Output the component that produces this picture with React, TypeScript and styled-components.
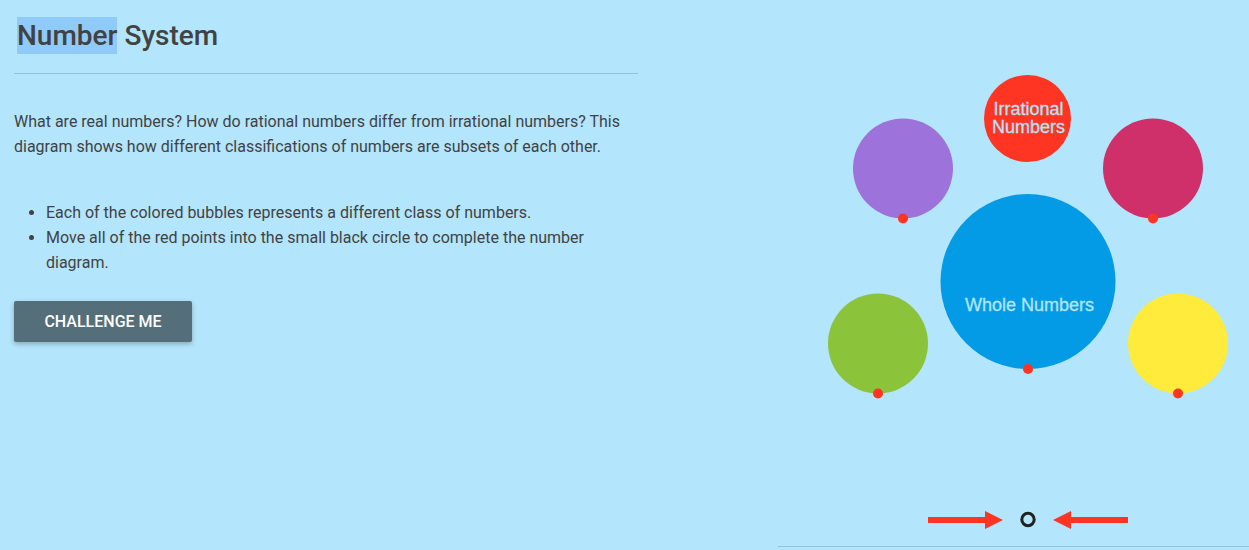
import React from "react";
import styled, { createGlobalStyle } from "styled-components";

const Global = createGlobalStyle`
  html, body { margin: 0; padding: 0; background: #b3e5fc; }
  body { font-family: Roboto, "Noto Sans", Arial, sans-serif; color: #424242; }
  #root { width: 1249px; height: 550px; overflow: hidden; }
`;

const Page = styled.div`
  display: flex;
  width: 1249px;
  height: 550px;
  background: #b3e5fc;
`;

const LeftPane = styled.section`
  width: 624px;
  margin-left: 14px;
  display: flex;
  flex-direction: column;
  align-items: flex-start;
`;

const Header = styled.header`
  align-self: stretch;
  padding: 17px 0 19px 3px;
  border-bottom: 1px solid #90c6dc;
`;

const Title = styled.h1`
  margin: 0;
  font-size: 28px;
  font-weight: 500;
  line-height: 37px;
  color: #424242;
`;

const Highlight = styled.span`
  display: inline-block;
  background: #90caf9;
`;

const Intro = styled.p`
  margin: 35px 0 0;
  font-size: 16px;
  line-height: 25px;
  color: #424242;
`;

const Steps = styled.ul`
  margin: 41px 0 0;
  padding-left: 32px;
  font-size: 16px;
  line-height: 25px;
  color: #424242;
`;

const Button = styled.button`
  margin-top: 26px;
  width: 178px;
  height: 41px;
  border: none;
  border-radius: 2px;
  background: #546e7a;
  color: #fff;
  font-family: Roboto, Arial, sans-serif;
  font-weight: 500;
  font-size: 16px;
  text-transform: uppercase;
  box-shadow: 0 2px 5px rgba(0, 0, 0, 0.26);
  cursor: pointer;
`;

const RightPane = styled.section`
  margin-left: auto;
  width: 471px;
  display: flex;
  flex-direction: column;
`;

const Diagram = styled.svg`
  display: block;
  width: 471px;
  height: 546px;
`;

const Rule = styled.div`
  height: 1px;
  background: #90c6dc;
`;

const BubbleLabel = styled.text`
  font-family: "Liberation Sans", Arial, sans-serif;
  font-size: 18px;
  fill: #b3e5fc;
  stroke: #b3e5fc;
  stroke-width: 0.3px;
`;

type Bubble = { cx: number; cy: number; r: number; color: string; dot: boolean };

const bubbles: Bubble[] = [
  { cx: 125, cy: 168.5, r: 50, color: "#9e72db", dot: true },
  { cx: 249.5, cy: 118.5, r: 43.5, color: "#ff3524", dot: false },
  { cx: 375, cy: 168.5, r: 50, color: "#cf306a", dot: true },
  { cx: 250, cy: 281.5, r: 87.5, color: "#039be5", dot: true },
  { cx: 100, cy: 343.5, r: 50, color: "#8bc33b", dot: true },
  { cx: 400, cy: 343.5, r: 50, color: "#ffeb3b", dot: true },
];

export default function App() {
  return (
    <>
      <Global />
      <Page>
        <LeftPane>
          <Header>
            <Title>
              <Highlight>Number</Highlight> System
            </Title>
          </Header>
          <Intro>
            What are real numbers? How do rational numbers differ from irrational numbers? This
            diagram shows how different classifications of numbers are subsets of each other.
          </Intro>
          <Steps>
            <li>Each of the colored bubbles represents a different class of numbers.</li>
            <li>Move all of the red points into the small black circle to complete the number diagram.</li>
          </Steps>
          <Button>Challenge Me</Button>
        </LeftPane>
        <RightPane>
          <Diagram viewBox="0 0 471 546">
            {bubbles.map((b, i) => (
              <circle key={i} cx={b.cx} cy={b.cy} r={b.r} fill={b.color} />
            ))}
            <BubbleLabel x={250.5} y={115} textAnchor="middle">Irrational</BubbleLabel>
            <BubbleLabel x={250.5} y={133} textAnchor="middle">Numbers</BubbleLabel>
            <BubbleLabel x={251.5} y={311} textAnchor="middle">Whole Numbers</BubbleLabel>
            {bubbles
              .filter((b) => b.dot)
              .map((b, i) => (
                <circle key={`d${i}`} cx={b.cx} cy={b.cy + b.r} r={5} fill="#ff3524" />
              ))}
            <rect x={150} y={517} width={58} height={6} fill="#ff3524" />
            <polygon points="207,511 225,520 207,529" fill="#ff3524" />
            <rect x={292} y={517} width={58} height={6} fill="#ff3524" />
            <polygon points="293,511 275,520 293,529" fill="#ff3524" />
            <circle cx={250} cy={519.5} r={6.2} fill="none" stroke="#212121" strokeWidth={3} />
          </Diagram>
          <Rule />
        </RightPane>
      </Page>
    </>
  );
}
